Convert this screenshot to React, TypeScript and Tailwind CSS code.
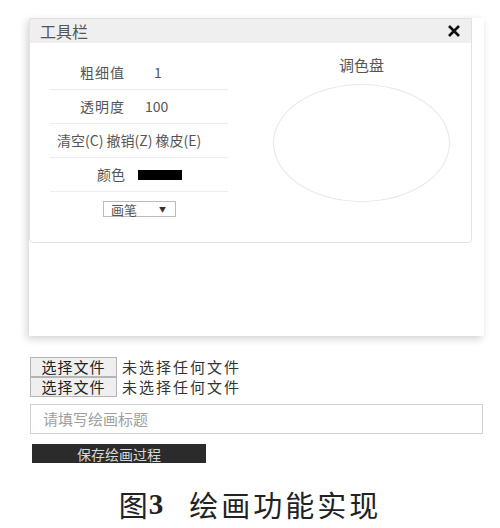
const ui = { fontFamily: '"Noto Sans CJK SC", "Liberation Sans", sans-serif' };

function Row({ children, last }: { children: React.ReactNode; last?: boolean }) {
    return (
        <div className={`h-[34px] flex items-center ${last ? '' : 'border-b border-[#ececec]'}`}>
            {children}
        </div>
    );
}

function FileRow() {
    return (
        <div className="flex items-center h-[20px]">
            <div className="h-[20px] w-[87px] bg-[#efefef] border border-[#b5b5b5] flex items-center justify-center text-[15px] text-[#222] leading-[18px] tracking-[1px]">
                选择文件
            </div>
            <span className="ml-[5px] text-[15px] text-[#333] leading-[18px] tracking-[2px]">未选择任何文件</span>
        </div>
    );
}

export default function App() {
    return (
        <div className="w-[500px] h-[528px] bg-white overflow-hidden" style={ui}>
            {/* Drawing panel */}
            <div className="ml-[29px] mt-[18px] w-[455px] h-[318px] bg-white shadow-[-2px_3px_8px_rgba(0,0,0,0.18)]">
                {/* Toolbar card */}
                <div className="w-[443px] h-[225px] border border-[#e2e2e2] rounded-b-[4px] bg-white">
                    <div className="h-[24px] bg-[#efefef] flex items-center justify-between pl-[10px] pr-[10px]">
                        <span className="text-[16px] text-[#555] leading-none">工具栏</span>
                        <svg width="14" height="12" viewBox="0 0 14 12">
                            <path d="M2 1 L12 11 M12 1 L2 11" stroke="#111" strokeWidth="2.6" />
                        </svg>
                    </div>
                    <div className="flex">
                        {/* Left controls */}
                        <div className="ml-[20px] mt-[13px] w-[178px] text-[14px] text-[#555]">
                            <Row>
                                <span className="w-[75px] text-right tracking-[1px]">粗细值</span>
                                <span className="ml-[29px]">1</span>
                            </Row>
                            <Row>
                                <span className="w-[75px] text-right tracking-[1px]">透明度</span>
                                <span className="ml-[20px]">100</span>
                            </Row>
                            <Row>
                                <span className="ml-[7px]">清空(C) 撤销(Z) 橡皮(E)</span>
                            </Row>
                            <Row>
                                <span className="w-[75px] text-right">颜色</span>
                                <span className="ml-[13px] w-[44px] h-[10px] bg-black" />
                            </Row>
                            <div className="h-[34px] flex items-center">
                                <div className="ml-[53px] w-[73px] h-[16px] border border-[#bbb] flex items-center justify-between pl-[7px] pr-[9px] text-[13px] text-[#555]">
                                    <span className="leading-none">画笔</span>
                                    <span className="text-[7px] leading-none text-[#333]">▼</span>
                                </div>
                            </div>
                        </div>
                        {/* Palette */}
                        <div className="ml-[45px] flex flex-col items-center">
                            <span className="mt-[14px] text-[15px] text-[#555] leading-none">调色盘</span>
                            <div className="mt-[12px] w-[177px] h-[118px] rounded-[50%] border border-[#e6e6e6]" />
                        </div>
                    </div>
                </div>
            </div>

            {/* Form */}
            <div className="ml-[30px] mt-[21px]">
                <FileRow />
                <FileRow />
                <div className="mt-[7px] w-[453px] h-[30px] border border-[#d2d2d2] flex items-center pl-[12px] text-[15px] text-[#a0a0a0]">
                    请填写绘画标题
                </div>
                <div className="mt-[10px] ml-[2px] w-[174px] h-[19px] bg-[#2b2b2b] flex items-center justify-center text-[14px] text-[#d8d8d8] leading-none">
                    保存绘画过程
                </div>
            </div>

            {/* Caption */}
            <div className="mt-[27px] flex justify-center items-center text-[29px] text-[#222] leading-none">
                <span className="tracking-[1px]">图</span>
                <span className="font-bold" style={{ fontFamily: '"Liberation Serif", serif' }}>3</span>
                <span className="ml-[26px] tracking-[3px]">绘画功能实现</span>
            </div>
        </div>
    );
}
